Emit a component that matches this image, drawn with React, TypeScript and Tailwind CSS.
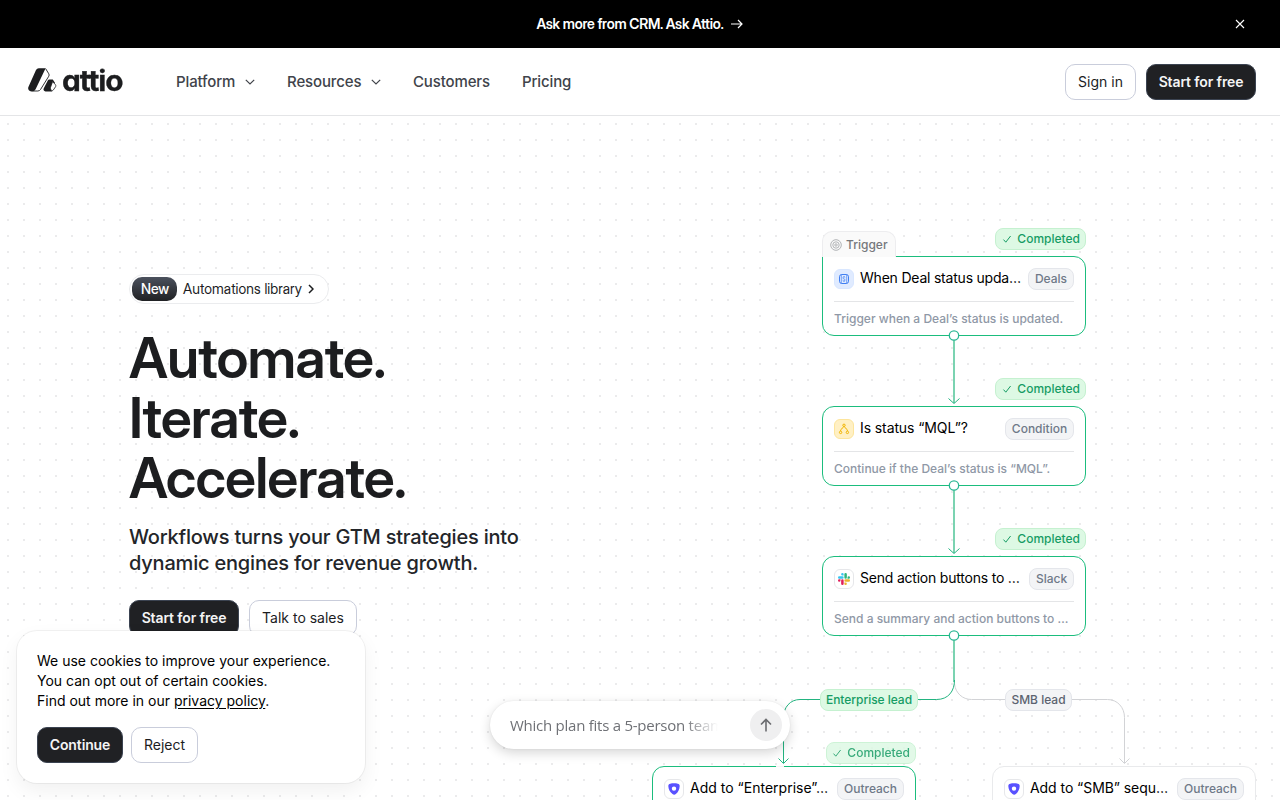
import React from "react";
import { clsx } from "clsx";

const inter = "font-['Inter',sans-serif]";

function ChevronDown() {
  return (
    <svg className="h-[10px] w-[10px]" viewBox="0 0 10 10" fill="none" stroke="currentColor" strokeWidth="1.2">
      <path d="M.8 2.800l4.200 4.200 4.200-4.200" />
    </svg>
  );
}

function LogoMark() {
  return (
    <svg className="h-[24px] w-[29px]" viewBox="0 0 29 24" fill="#1c1d1f">
      <path d="M10.800 0.300h6.800L7.600 21.200a3.600 3.600 0 0 1-3.100 2.200H3.400a3.200 3.200 0 0 1-2.900-4.600L8 2a3.200 3.200 0 0 1 2.800-1.700z" />
      <path d="M17.600 0.600l3.200 5.200a2.400 2.400 0 0 1 0 2.400l-8.200 13.200a3.400 3.400 0 0 1-2.800 1.600H4.600" fill="none" stroke="#1c1d1f" strokeWidth="0.900" />
      <path d="M21.300 11.400h3.500l2.300 3.600-3.400 2.200.4 6.200h-6.600a2 2 0 0 1-1.700-3.100l4-7.900a1.700 1.700 0 0 1 1.500-1z" />
      <path d="M24.600 13.600l2.900 3.200a1.800 1.800 0 0 1 .1 1.900l-2.200 3.200a1.800 1.800 0 0 1-1.600.8c-1-.8-1.500-2-1.300-3.300z" fill="#fff" stroke="#1c1d1f" strokeWidth="0.800" />
    </svg>
  );
}

function Button({ dark, className, children }: { dark?: boolean; className?: string; children: React.ReactNode }) {
  return (
    <button
      className={clsx(
        "flex h-9 items-center justify-center rounded-[10px] border text-[14px] leading-5 whitespace-nowrap",
        dark ? "border-[#3b4351] bg-[#202124] font-semibold tracking-[-0.12px] text-[#f4f4f5]" : "border-[#c9cddb] bg-white font-normal text-[#1c1d1f]",
        className,
      )}
    >
      {children}
    </button>
  );
}

function Check() {
  return (
    <svg className="h-[10px] w-[10px]" viewBox="0 0 10 10" fill="none" stroke="currentColor" strokeWidth="1">
      <path d="M1.500 5.600l2.300 2.600L8.600 2" />
    </svg>
  );
}

function Completed({ className }: { className: string }) {
  return (
    <div
      className={clsx(
        "absolute flex h-[22px] items-center justify-end gap-[5px] rounded-lg border border-[#c5f1d0] bg-[#ddf9e4] pr-[5px] text-[12px] font-medium text-[#169c64]",
        className,
      )}
    >
      <Check />
      <span>Completed</span>
    </div>
  );
}

function DealIcon() {
  return (
    <span className="flex h-5 w-5 items-center justify-center rounded-md border border-[#d9e7ff] bg-[#e0ebff] text-[#407ff2]">
      <svg className="h-[12px] w-[12px]" viewBox="0 0 12 12" fill="none" stroke="currentColor" strokeWidth="1">
        <rect x="1.500" y="1.500" width="9" height="9" rx="2.300" />
        <path d="M3.300 1.500v9M8.700 1.500v9M7.200 4.400c-.3-.5-2.400-.7-2.400.5 0 1.300 2.400.8 2.400 2.100 0 1.200-2.200 1-2.500.4M6 3v1M6 8v1" strokeWidth=".7" />
      </svg>
    </span>
  );
}

function ConditionIcon() {
  return (
    <span className="flex h-5 w-5 items-center justify-center rounded-md border border-[#fde59c] bg-[#fff0c4] text-[#f2b500]">
      <svg className="h-[12px] w-[12px]" viewBox="0 0 12 12" fill="none" stroke="currentColor" strokeWidth="1">
        <circle cx="6" cy="2.300" r="1.200" />
        <path d="M5.600 3.500C5.400 5.500 2.500 5.300 2.500 8M6.400 3.500C6.600 5.500 9.500 5.300 9.500 8" />
        <circle cx="2.600" cy="9.400" r="1.200" />
        <circle cx="9.400" cy="9.400" r="1.200" />
      </svg>
    </span>
  );
}

function SlackIcon() {
  return (
    <span className="flex h-5 w-5 items-center justify-center rounded-md border border-[#e6e7ea] bg-white">
      <svg className="h-[12px] w-[12px]" viewBox="0 0 24 24">
        <path fill="#e01e5a" d="M5 15.200a2.500 2.500 0 1 1-2.500-2.500H5zM6.300 15.200a2.500 2.500 0 0 1 5 0v6.300a2.500 2.500 0 0 1-5 0z" />
        <path fill="#36c5f0" d="M8.800 5a2.500 2.500 0 1 1 2.500-2.500V5zM8.800 6.300a2.500 2.500 0 0 1 0 5H2.500a2.500 2.500 0 0 1 0-5z" />
        <path fill="#2eb67d" d="M19 8.800a2.500 2.500 0 1 1 2.500 2.500H19zM17.700 8.800a2.500 2.500 0 0 1-5 0V2.500a2.500 2.500 0 0 1 5 0z" />
        <path fill="#ecb22e" d="M15.200 19a2.500 2.500 0 1 1-2.500 2.500V19zM15.200 17.700a2.500 2.500 0 0 1 0-5h6.300a2.500 2.500 0 0 1 0 5z" />
      </svg>
    </span>
  );
}

function OutreachIcon() {
  return (
    <span className="flex h-5 w-5 items-center justify-center rounded-md border border-[#e6e7ea] bg-white">
      <svg className="h-[12px] w-[12px]" viewBox="0 0 12 12">
        <path
          fill="#5951ff"
          fillRule="evenodd"
          d="M2.200.7C4.500.2 7.500.2 9.800.7c1.200.2 1.900 1 1.900 2.200-.1 3.400-1.800 6.500-3.900 8.200-1 .9-2.300.8-3.300 0C2.200 9.300.4 6.600.3 3.100.3 1.700 1 .9 2.200.7zM6 3.400a2.200 2.200 0 1 0 0 4.400 2.200 2.200 0 0 0 0-4.400z"
        />
      </svg>
    </span>
  );
}

type NodeProps = {
  className: string;
  icon: React.ReactNode;
  title: string;
  titleClass?: string;
  tag: string;
  tagClass: string;
  desc?: string;
};

function FlowNode({ className, icon, title, titleClass = "tracking-[-0.21px]", tag, tagClass, desc }: NodeProps) {
  return (
    <div className={clsx("absolute h-20 w-[264px] border bg-white px-[11px]", className)}>
      <div className="flex h-[45px] items-center justify-between border-b border-[#e4e5e7]">
        <div className="flex items-center gap-1.5 pb-px">
          {icon}
          <span className={clsx("pb-px text-[14px] leading-5 font-normal whitespace-nowrap text-black", titleClass)}>{title}</span>
        </div>
        <span
          className={clsx(
            "flex h-[22px] shrink-0 items-center justify-center rounded-lg border border-[#e4e6eb] bg-[#f3f4f6] text-[12px] font-medium text-[#6f7988]",
            tagClass,
          )}
        >
          {tag}
        </span>
      </div>
      <div className="pt-[9px] text-[12px] leading-4 font-medium whitespace-nowrap text-[#8f98a6]">{desc}</div>
    </div>
  );
}

function Connectors() {
  return (
    <svg className="absolute top-0 left-0 h-[684px] w-[1280px]" viewBox="0 116 1280 684" fill="none">
      <g stroke="#7bd3b1" strokeWidth="2">
        <path d="M954 340v63M954 490v63M954 640v42" />
      </g>
      <g stroke="#d2d3d6" strokeWidth="1">
        <path d="M954.500 684c1 9 8 15.500 17 15.500h136c10 0 17 8 17 18V763M1119.500 758.500l5 5 5-5" />
      </g>
      <g stroke="#23b480" strokeWidth="1">
        <path d="M948.500 398.500l5.500 5 5.500-5M948.500 548.500l5.500 5 5.500-5" />
        <path d="M954.500 680c0 11-6 19.500-18 19.500H800c-10 0-16.500 8-16.500 18V763M778.500 758.500l5 5 5-5" />
      </g>
    </svg>
  );
}

function Handles() {
  return (
    <svg className="absolute top-0 left-0 h-[684px] w-[1280px]" viewBox="0 116 1280 684" fill="#fff" stroke="#2bb794" strokeWidth="1.300">
      <circle cx="954" cy="335.500" r="4.700" />
      <circle cx="954" cy="485.500" r="4.700" />
      <circle cx="954" cy="635.500" r="4.700" />
      <path d="M776 766.500h8" stroke="#f3f4f4" strokeWidth="1" />
    </svg>
  );
}

export default function App() {
  return (
    <div className={clsx("relative flex h-[800px] w-[1280px] flex-col overflow-hidden bg-white text-[#1c1d1f]", inter)}>
      <div className="grid h-12 shrink-0 grid-cols-[1fr_auto_1fr] items-center bg-black text-white">
        <span />
        <div className="flex items-center gap-[7px] pr-px font-['Inter_Display','Inter',sans-serif] text-[14px] font-semibold">
          <span className="pb-px tracking-[-0.25px]">Ask more from CRM. Ask Attio.</span>
          <svg className="h-3 w-3" viewBox="0 0 12 12" fill="none" stroke="currentColor" strokeWidth="1.200">
            <path d="M0 6h11M7 2l4 4-4 4" />
          </svg>
        </div>
        <svg className="mr-[35px] h-[10px] w-[10px] justify-self-end" viewBox="0 0 10 10" fill="none" stroke="currentColor" strokeWidth="1.100">
          <path d="M1 1l8 8M9 1l-8 8" />
        </svg>
      </div>

      <header className="flex h-[68px] shrink-0 items-center border-b border-[#e4e5e7] pr-6 pl-7">
        <div className="flex w-[148px] items-center gap-[5px] pb-[3px]">
          <LogoMark />
          <span className="origin-left scale-x-[1.03] pt-px text-[29px] leading-6 font-bold tracking-[-1.1px] [font-feature-settings:'cv11'] [-webkit-text-stroke:0.3px_#1c1d1f]">attio</span>
        </div>
        <nav className="flex flex-1 items-center pt-px text-[15px] font-medium tracking-[-0.13px] text-[#40434a]">
          <span className="flex w-[111px] items-center gap-[10px]">Platform <ChevronDown /></span>
          <span className="flex w-[126px] items-center gap-[10px]">Resources <ChevronDown /></span>
          <span className="w-[109px]">Customers</span>
          <span>Pricing</span>
        </nav>
        <div className="flex gap-[10px]">
          <Button className="w-[71px]">Sign in</Button>
          <Button dark className="w-[110px]">Start for free</Button>
        </div>
      </header>

      <main className="relative flex-1 bg-[radial-gradient(circle_at_center,#ebebec_1px,transparent_1px)] bg-[size:16px_16px]">
        <section className="flex flex-col items-start pt-[158px] pl-[129px]">
          <div className="flex h-[30px] w-[200px] items-center rounded-full border border-[#ebecee] bg-white pl-[2px] font-['Inter_Display','Inter',sans-serif] text-[14px] leading-5">
            <span className="flex h-6 w-[45px] items-center justify-center rounded-[10px] bg-gradient-to-b from-[#4b515d] to-[#202124] pb-px pl-px font-medium text-white">New</span>
            <span className="ml-[6px] pb-px tracking-[0.08px]">Automations library</span>
            <svg className="ml-[6px] h-[10px] w-[6px]" viewBox="0 0 6 10" fill="none" stroke="currentColor" strokeWidth="1.500">
              <path d="M1 1l4 4-4 4" />
            </svg>
          </div>
          <h1 className="mt-[24px] font-['Inter_Display','Inter',sans-serif] text-[56px] font-semibold tracking-[-0.86px]">
            <span className="block h-[60px] leading-[60px]">Automate.</span>
            <span className="block h-[60px] leading-[60px]">Iterate.</span>
            <span className="block h-[60px] leading-[60px]">Accelerate.</span>
          </h1>
          <p className="mt-[16px] text-[20px] leading-[26px] font-medium tracking-[-0.2px] text-[#232529]">
            Workflows turns your GTM strategies into
            <br />
            dynamic engines for revenue growth.
          </p>
          <div className="mt-6 flex gap-[10px]">
            <Button dark className="w-[110px]">Start for free</Button>
            <Button className="w-[108px]">Talk to sales</Button>
          </div>
        </section>

        <Connectors />
        <FlowNode className="top-[140px] left-[822px] rounded-xl rounded-tl-none border-[#1bbd7d]" icon={<DealIcon />} title="When Deal status upda…" tag="Deals" tagClass="w-[46px]" desc="Trigger when a Deal’s status is updated." />
        <div className="absolute top-[115px] left-[822px] flex h-[26px] w-[74px] items-center gap-1 rounded-t-[10px] border border-b-0 border-[#ededef] bg-[#fafafa] pl-[7px] text-[12px] font-medium text-[#75777c]">
          <svg className="h-[12px] w-[12px]" viewBox="0 0 12 12" fill="none" stroke="#a9abaf" strokeWidth=".9">
            <circle cx="6" cy="6" r="5.300" />
            <circle cx="6" cy="6" r="3.200" />
            <circle cx="6" cy="6" r="1.200" />
          </svg>
          Trigger
        </div>
        <FlowNode className="top-[290px] left-[822px] rounded-xl border-[#1bbd7d]" icon={<ConditionIcon />} title="Is status “MQL”?" titleClass="tracking-[-0.1px]" tag="Condition" tagClass="w-[69px]" desc="Continue if the Deal’s status is “MQL”." />
        <FlowNode className="top-[440px] left-[822px] rounded-xl border-[#1bbd7d]" icon={<SlackIcon />} title="Send action buttons to …" tag="Slack" tagClass="w-[45px]" desc="Send a summary and action buttons to …" />
        <FlowNode className="top-[650px] left-[652px] rounded-xl border-[#1bbd7d]" icon={<OutreachIcon />} title="Add to “Enterprise”…" titleClass="tracking-[0.01px]" tag="Outreach" tagClass="w-[67px]" />
        <FlowNode className="top-[650px] left-[992px] rounded-xl border-[#e9eaec]" icon={<OutreachIcon />} title="Add to “SMB” sequ…" titleClass="tracking-[-0.06px]" tag="Outreach" tagClass="w-[67px]" />
        <Handles />
        <Completed className="top-[112px] left-[995px] w-[91px]" />
        <Completed className="top-[262px] left-[995px] w-[91px]" />
        <Completed className="top-[412px] left-[995px] w-[91px]" />
        <Completed className="top-[626px] left-[826px] w-[90px] opacity-85" />
        <div className="absolute top-[573px] left-[820px] flex h-[22px] w-[98px] items-center justify-center rounded-lg border border-[#c5f1d0] bg-[#ddf9e4] text-[12px] font-medium tracking-[-0.04px] text-[#169c64]">Enterprise lead</div>
        <div className="absolute top-[573px] left-[1005px] flex h-[22px] w-[67px] items-center justify-center rounded-lg border border-[#e4e6eb] bg-[#f3f4f6] text-[12px] font-medium text-[#5c6370]">SMB lead</div>
      </main>

      <div className="absolute top-[701px] left-[490px] flex h-12 w-[300px] items-center justify-between rounded-full bg-white pr-2 pl-5 shadow-[0_4px_12px_rgba(0,0,0,0.16),0_0_2px_rgba(0,0,0,0.08)]">
        <span className="w-[208px] overflow-hidden pb-px font-['Open_Sans',sans-serif] text-[15px] leading-6 tracking-[-0.25px] whitespace-nowrap text-[#6f7176] [mask-image:linear-gradient(to_right,black_174px,transparent_208px)]">Which plan fits a 5-person team</span>
        <span className="flex h-8 w-8 items-center justify-center rounded-full bg-[#efeff0] text-[#6b6c70]">
          <svg className="h-[14px] w-[12px]" viewBox="0 0 12 14" fill="none" stroke="currentColor" strokeWidth="1.600">
            <path d="M6 13.500V1.500M1 6.500l5-5 5 5" />
          </svg>
        </span>
      </div>

      <div className="absolute top-[631px] left-[17px] h-[152px] w-[348px] rounded-[20px] bg-white px-5 pt-5 shadow-[0_0_0_1px_rgba(0,0,0,0.05),0_8px_20px_rgba(0,0,0,0.06)]">
        <p className="text-[14px] leading-5 font-normal text-black">
          We use cookies to improve your experience.
          <br />
          You can opt out of certain cookies.
          <br />
          Find out more in our <span className="underline underline-offset-2">privacy policy</span>.
        </p>
        <div className="mt-4 flex gap-2">
          <Button dark className="w-[86px]">Continue</Button>
          <Button className="w-[67px]">Reject</Button>
        </div>
      </div>
    </div>
  );
}
